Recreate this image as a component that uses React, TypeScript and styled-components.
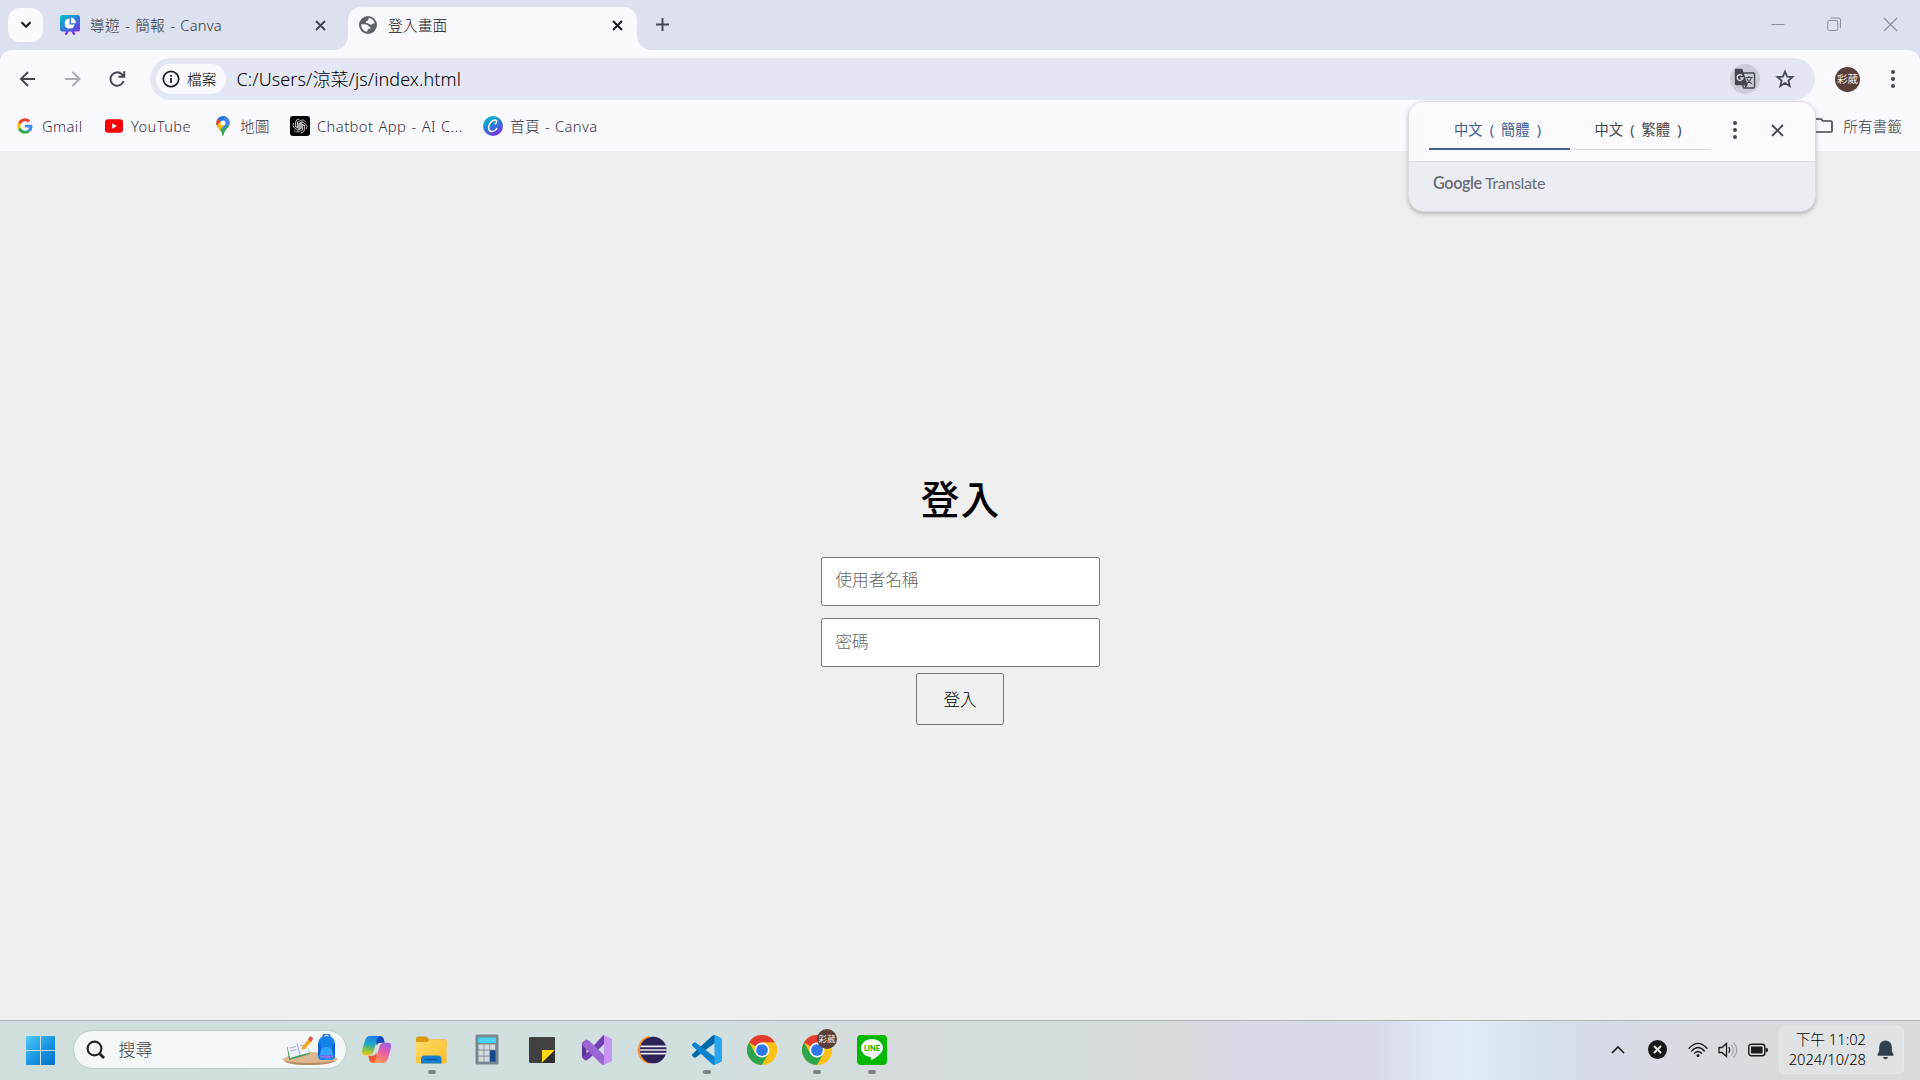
import React from "react";
import styled, { createGlobalStyle } from "styled-components";

const GlobalStyle = createGlobalStyle`
  * { box-sizing: border-box; }
  html, body { margin: 0; padding: 0; overflow: hidden; }
  body { font-family: "Noto Sans", "Noto Sans CJK TC", sans-serif; font-weight: 300; }
  svg { display: block; flex: none; }
`;

const Screen = styled.div`
  width: 1920px;
  height: 1080px;
  display: flex;
  flex-direction: column;
  background: #efefef;
`;

const Text = styled.span<{ $size?: number; $ls?: number; $ws?: number; $color?: string; $weight?: number }>`
  font-size: ${(p) => p.$size ?? 14.7}px;
  letter-spacing: ${(p) => p.$ls ?? 0}px;
  word-spacing: ${(p) => p.$ws ?? 0}px;
  color: ${(p) => p.$color ?? "#33363d"};
  font-weight: ${(p) => p.$weight ?? 300};
  line-height: 20px;
  white-space: nowrap;
`;

/* ---------- tab strip ---------- */
const TabStrip = styled.header`
  height: 50px;
  flex: none;
  display: flex;
  background: #dde0ee;
`;

const TabSearch = styled.button`
  width: 35px;
  height: 34px;
  margin: 8px 0 0 8px;
  padding: 0;
  border: 0;
  border-radius: 12px;
  background: #fbfaff;
  display: grid;
  place-items: center;
`;

const Tab = styled.div<{ $active?: boolean; $w: number }>`
  position: relative;
  width: ${(p) => p.$w}px;
  height: 43px;
  margin-top: 7px;
  padding: ${(p) => (p.$active ? "0 14px 7px 11px" : "0 22px 7px 17px")};
  display: flex;
  align-items: center;
  background: ${(p) => (p.$active ? "#faf9ff" : "transparent")};
  border-radius: 13px 13px 0 0;
  &::before, &::after {
    content: "";
    display: ${(p) => (p.$active ? "block" : "none")};
    position: absolute;
    bottom: 0;
    width: 14px;
    height: 14px;
  }
  &::before { left: -14px; background: radial-gradient(circle at 0 0, transparent 13.5px, #faf9ff 14.2px); }
  &::after { right: -14px; background: radial-gradient(circle at 100% 0, transparent 13.5px, #faf9ff 14.2px); }
`;

const TabTitle = styled(Text)<{ $gap: number }>`
  flex: 1;
  margin-left: ${(p) => p.$gap}px;
`;

const NewTab = styled.div`
  margin: 18px 0 0 19px;
`;

const WindowControls = styled.div`
  margin: 17px 22px 0 auto;
  display: flex;
  gap: 42px;
`;

/* ---------- toolbar ---------- */
const ToolbarBack = styled.div`
  flex: none;
  background: linear-gradient(#dde0ee 0 14px, #faf9ff 14px);
`;

const Toolbar = styled.div`
  height: 53px;
  display: flex;
  align-items: center;
  padding: 5px 0 0 16px;
  background: #faf9ff;
  border-radius: 12px 12px 0 0;
`;

const NavButtons = styled.div`
  display: flex;
  gap: 20.5px;
  width: 134px;
`;

const AddressBar = styled.div`
  width: 1665px;
  height: 42px;
  border-radius: 21px;
  background: #e4e7f3;
  display: flex;
  align-items: center;
  padding: 0 20px 0 6px;
`;

const FileChip = styled.div`
  width: 70px;
  height: 30px;
  border-radius: 15px;
  background: #faf9ff;
  display: flex;
  align-items: center;
  gap: 7px;
  padding-left: 6px;
`;

const Url = styled(Text)`
  flex: 1;
  margin-left: 10.5px;
`;

const TranslateBadge = styled.div`
  width: 30px;
  height: 30px;
  border-radius: 50%;
  background: #cacdd8;
  display: grid;
  place-items: center;
  margin-right: 15px;
`;

const Avatar = styled.div<{ $d: number; $fs: number }>`
  width: ${(p) => p.$d}px;
  height: ${(p) => p.$d}px;
  border-radius: 50%;
  background: #5a4038;
  color: #f6efec;
  font-size: ${(p) => p.$fs}px;
  font-weight: 400;
  line-height: ${(p) => p.$d - 1}px;
  text-align: center;
  white-space: nowrap;
`;

const ToolbarEnd = styled.div`
  display: flex;
  align-items: center;
  gap: 29.5px;
  margin-left: 20px;
`;

/* ---------- bookmarks ---------- */
const Bookmarks = styled.nav`
  height: 48px;
  flex: none;
  display: flex;
  align-items: center;
  padding: 0 18px 2px 15px;
  background: #faf9ff;
`;

const Bookmark = styled.div<{ $w?: number; $gap?: number }>`
  width: ${(p) => (p.$w ? `${p.$w}px` : "auto")};
  display: flex;
  align-items: center;
  gap: ${(p) => p.$gap ?? 7}px;
`;

const AllBookmarks = styled(Bookmark)`
  margin-left: auto;
`;

/* ---------- translate popup ---------- */
const Popup = styled.section`
  position: absolute;
  left: 1408px;
  top: 101px;
  width: 408px;
  height: 111px;
  border-radius: 16px;
  border: 1px solid #dcdde3;
  overflow: hidden;
  background: #ecedf3;
  box-shadow: 0 2px 4px rgba(0, 0, 0, 0.25);
`;

const PopupHeader = styled.div`
  height: 60px;
  background: #fdfbff;
  border-bottom: 1px solid #d8dae2;
  display: flex;
  padding-left: 20px;
`;

const LangTab = styled.div<{ $active?: boolean }>`
  width: ${(p) => (p.$active ? 141 : 140)}px;
  height: 48px;
  display: flex;
  justify-content: center;
  padding: 18px 4px 0 0;
  border-bottom: ${(p) => (p.$active ? "2px solid #3f5f90" : "1px solid #d8dae2")};
`;

const PopupActions = styled.div`
  display: flex;
  align-items: center;
  gap: 33px;
  margin-left: 22px;
  height: 56px;
`;

const PopupFooter = styled.div`
  padding: 11px 0 0 24px;
  font-family: "Lato", sans-serif;
  font-size: 16.2px;
  line-height: 20px;
  font-weight: 400;
  letter-spacing: -0.4px;
  color: #6a6c72;
  b { font-weight: 600; letter-spacing: -0.4px; }
`;

/* ---------- login page ---------- */
const Page = styled.main`
  flex: 1;
  display: flex;
  flex-direction: column;
  align-items: center;
  padding-top: 318px;
`;

const Heading = styled.h1`
  margin: 0 0 28px;
  height: 60px;
  line-height: 60px;
  font-size: 38.5px;
  letter-spacing: 1.5px;
  padding-left: 1.5px;
  font-weight: 500;
  color: #000;
`;

const Field = styled.input<{ $lift: number }>`
  width: 279px;
  height: 49px;
  margin-bottom: 12px;
  padding: 0 13px ${(p) => p.$lift}px 14px;
  border: 1px solid #767676;
  border-radius: 2.5px;
  background: #fff;
  font: 300 16.6px "Noto Sans CJK TC", sans-serif;
  &::placeholder { color: #666; opacity: 1; }
`;

const LoginButton = styled.button`
  width: 88px;
  height: 52px;
  margin-top: -6px;
  padding: 0;
  border: 1px solid #767676;
  border-radius: 2.5px;
  background: #efefef;
  color: #000;
  font: 300 16.6px "Noto Sans CJK TC", sans-serif;
`;

/* ---------- taskbar ---------- */
const Taskbar = styled.footer`
  height: 60px;
  flex: none;
  display: flex;
  align-items: center;
  border-top: 1px solid #adb2b4;
  padding: 0 16px 2px 26px;
  background: linear-gradient(90deg, #d0dfde 0, #d1dfdf 700px, #d6dbdc 900px, #d3dddc 1035px, #d9dadc 1190px,
    #d9d9e6 1215px, #d8d9e9 1370px, #e0e8f6 1435px, #e1ecf9 1465px, #d5e2ec 1540px, #d6dae9 1590px, #d9dbe0 1700px, #dadbdd 1920px);
`;

const StartButton = styled.div`
  padding-top: 2px;
`;

const SearchBox = styled.div`
  width: 274px;
  height: 39px;
  margin-left: 18px;
  border: 1px solid #bfcccc;
  border-radius: 20px;
  background: #f3f7f8;
  display: flex;
  align-items: center;
  padding: 0 7px 0 12px;
`;

const SearchLabel = styled(Text)`
  flex: 1;
  margin-left: 12.5px;
`;

const Apps = styled.div`
  display: flex;
  margin-left: 2px;
`;

const AppButton = styled.div<{ $running?: boolean }>`
  position: relative;
  width: 55px;
  height: 56px;
  display: grid;
  place-items: center;
  &::after {
    content: "";
    display: ${(p) => (p.$running ? "block" : "none")};
    position: absolute;
    left: 24px;
    bottom: 4px;
    width: 8px;
    height: 4px;
    border-radius: 2px;
    background: #7d8384;
  }
`;

const ProfileBadge = styled.div`
  position: absolute;
  left: 28px;
  top: 7px;
`;

const Tray = styled.div`
  margin-left: auto;
  display: flex;
  align-items: center;
`;

const TrayItem = styled.div<{ $w: number }>`
  width: ${(p) => p.$w}px;
`;

const Clock = styled.div`
  width: 125px;
  height: 48px;
  border-radius: 5px;
  background: #e1e2e4;
  border: 1px solid #e6e7e9;
  display: flex;
  align-items: center;
  gap: 11px;
  padding-left: 8px;
`;

const ClockText = styled.div`
  display: flex;
  flex-direction: column;
  align-items: flex-end;
  width: 78px;
  padding-bottom: 2px;
`;

/* ---------- icons ---------- */
const Cross = ({ s, w, c }: { s: number; w: number; c: string }) => (
  <svg width={s} height={s} viewBox={`0 0 ${s} ${s}`} stroke={c} strokeWidth={w}>
    <path d={`M1 1L${s - 1} ${s - 1}M${s - 1} 1L1 ${s - 1}`} />
  </svg>
);

const Dots = ({ c }: { c: string }) => (
  <svg width="6" height="20" viewBox="0 0 6 20" fill={c}>
    <circle cx="3" cy="3" r="2" /><circle cx="3" cy="10" r="2" /><circle cx="3" cy="17" r="2" />
  </svg>
);

const PresentationIcon = () => (
  <svg width="20" height="20" viewBox="0 0 20 20">
    <defs>
      <linearGradient id="pres" x1="0" y1="0" x2="1" y2="1">
        <stop offset="0" stopColor="#00c4cc" /><stop offset=".5" stopColor="#2f7fd6" /><stop offset="1" stopColor="#7d2ae8" />
      </linearGradient>
    </defs>
    <path d="M8.500 14L6 19M11.500 14L14 19" stroke="#7d2ae8" strokeWidth="2.200" strokeLinecap="round" />
    <rect width="20" height="16.500" rx="2.500" fill="url(#pres)" />
    <path d="M9.500 3.600A5 5 0 1 0 14.600 9.600H9.500Z" fill="#fff" />
    <path d="M11 2.600V8.200H15.800A5.200 5.200 0 0 0 11 2.600Z" fill="#fff" />
  </svg>
);

const GlobeIcon = () => (
  <svg width="18" height="18" viewBox="0 0 18 18">
    <circle cx="9" cy="9" r="9" fill="#5f6368" />
    <path d="M10 2.100C12.800 2.500 15 4.600 15.700 7.200C14.600 7.800 13.400 7.500 12.700 8.400C11.700 9.300 10.400 8.400 9.700 7.600C8.600 6.900 6.800 7.400 6.900 5.900C7.100 4.900 8.600 5.200 9.200 4.300C9.600 3.500 9.200 2.700 10 2.100ZM2.200 8.300C4.600 8.100 7.600 8.200 9.400 9.900C10.100 10.900 11.900 10.900 11.400 12.300C10.500 13 9 12.800 8.600 14.100C8.500 14.900 8.400 15.400 7.900 15.800C4.600 15.200 2 12.400 2.200 8.300Z" fill="#faf9ff" />
  </svg>
);

const GoogleG = () => (
  <svg width="20" height="20" viewBox="-7 -7 62 62">
    <path fill="#EA4335" d="M24 9.5c3.54 0 6.71 1.22 9.21 3.6l6.85-6.85C35.9 2.38 30.47 0 24 0 14.62 0 6.51 5.38 2.56 13.22l7.98 6.19C12.43 13.72 17.74 9.5 24 9.5z" />
    <path fill="#4285F4" d="M46.98 24.55c0-1.57-.15-3.09-.38-4.55H24v9.02h12.94c-.58 2.96-2.26 5.48-4.78 7.18l7.73 6c4.51-4.18 7.09-10.36 7.09-17.65z" />
    <path fill="#FBBC05" d="M10.53 28.59c-.48-1.45-.76-2.99-.76-4.59s.27-3.14.76-4.59l-7.98-6.19C.92 16.46 0 20.12 0 24s.92 7.54 2.56 10.78l7.97-6.19z" />
    <path fill="#34A853" d="M24 48c6.48 0 11.93-2.13 15.89-5.81l-7.73-6c-2.15 1.45-4.92 2.3-8.16 2.3-6.26 0-11.57-4.22-13.47-9.91l-7.98 6.19C6.51 42.62 14.62 48 24 48z" />
  </svg>
);

const YouTubeIcon = () => (
  <svg width="20" height="20" viewBox="0 0 20 20">
    <rect x="1" y="3.300" width="18" height="13.400" rx="3" fill="#f00" />
    <path d="M8.200 7.200V12.800L13 10Z" fill="#fff" />
  </svg>
);

const MapsIcon = () => (
  <svg width="20" height="20" viewBox="0 0 20 20">
    <defs>
      <clipPath id="pin"><path d="M10 .3A6.800 6.800 0 0 0 3.200 7.100C3.200 9.500 4.600 11 6 12.800C7.800 15 8.900 16.600 9.300 18.900Q10 20.600 10.700 18.900C11.100 16.600 12.200 15 14 12.800C15.400 11 16.800 9.500 16.800 7.100A6.800 6.800 0 0 0 10 .3Z" /></clipPath>
    </defs>
    <g clipPath="url(#pin)">
      <rect width="20" height="20" fill="#34a853" />
      <path d="M0 0H20V3L10 8L4 3Z" fill="#4285f4" />
      <path d="M12 0L20 0V3.500L10 14L7.500 5.500Z" fill="#4285f4" />
      <path d="M0 0H3L4.800 2.600L8 5.500L3.500 11L0 9Z" fill="#ea4335" />
      <path d="M2.500 11.500L7.800 5.300L11.800 8.700L6 15Z" fill="#fbbc04" />
      <path d="M4.900 2.300L10 0H13L8 5.800Z" fill="#1a73e8" />
    </g>
    <circle cx="10" cy="7.100" r="2.500" fill="#fff" />
  </svg>
);

const ChatbotIcon = () => (
  <svg width="20" height="20" viewBox="0 0 20 20">
    <rect width="20" height="20" rx="3" fill="#000" />
    <g fill="none" stroke="#d0d0d0" strokeWidth=".8">
      {[0, 60, 120, 180, 240, 300].map((a) => (
        <path key={a} transform={`rotate(${a} 10 10)`} d="M7.600 11.400V6.200L11 4.200Q14 3 15.800 6M9 11.600V7.400L12.600 5.400" />
      ))}
    </g>
  </svg>
);

const CanvaIcon = () => (
  <svg width="20" height="20" viewBox="0 0 20 20">
    <defs>
      <linearGradient id="canva" x1=".2" y1="0" x2=".7" y2="1">
        <stop offset="0" stopColor="#07bfcb" /><stop offset=".5" stopColor="#2a7bd8" /><stop offset="1" stopColor="#7a2be6" />
      </linearGradient>
    </defs>
    <circle cx="10" cy="10" r="10" fill="url(#canva)" />
    <path d="M12.200 7.800C13.800 7.500 14.400 4 12 4C8.500 4 5.200 9 5.600 12.400C6 16.200 10.700 16.600 13.800 12.600" fill="none" stroke="#fff" strokeWidth="1.500" strokeLinecap="round" />
  </svg>
);

const TranslateIcon = () => (
  <svg width="22" height="22" viewBox="0 0 22 22">
    <rect x="9" y="5" width="11.500" height="15" rx="1.200" fill="#cacdd8" stroke="#44474f" strokeWidth="1.400" />
    <path d="M2.200 .8H8.300L13.800 17.200H2.200Q.8 17.200 .8 15.800V2.200Q.8 .8 2.200 .8Z" fill="#44474f" />
    <path d="M10.500 17L13.500 17L11.500 20.500Z" fill="#44474f" />
    <path d="M8.300 7.600A2.900 2.900 0 1 0 8.900 10H6.400" fill="none" stroke="#e4e7f3" strokeWidth="1.300" />
    <path d="M11.500 9.500H18.700M15 8V9.500M17.300 9.800C16.500 12.500 14.600 14.400 12.800 15.800M12.800 10.500C14 13 16 14.800 18 15.800" fill="none" stroke="#44474f" strokeWidth="1.100" />
  </svg>
);

const WindowsLogo = () => (
  <svg width="29" height="29" viewBox="0 0 29 29">
    <defs>
      <linearGradient id="win" gradientUnits="userSpaceOnUse" x1="0" y1="0" x2="29" y2="29">
        <stop offset="0" stopColor="#4fcbf9" /><stop offset=".5" stopColor="#1c97e4" /><stop offset="1" stopColor="#0470cb" />
      </linearGradient>
    </defs>
    <path fill="url(#win)" d="M1 0H14V14H0V1Q0 0 1 0ZM15 0H28Q29 0 29 1V14H15ZM0 15H14V29H1Q0 29 0 28ZM15 15H29V28Q29 29 28 29H15Z" />
  </svg>
);

const SchoolArt = () => (
  <svg width="58" height="32" viewBox="0 0 58 32">
    <path d="M1 25Q14 18 32 18Q48 18 57 25Q52 31 28 31Q6 31 1 25Z" fill="#dfb78e" />
    <path d="M3 27Q28 31 55 27Q48 31 28 31Q8 31 3 27Z" fill="#b98a63" />
    <path d="M6 13L25 8L29 20L8 26Z" fill="#3f9b55" />
    <path d="M6 11L16 8.500L26 7L28 19L19 21L9 24Z" fill="#eef0fa" />
    <path d="M16 9L19 21M9 14L15 12.500M10 17L15.500 15.500M19 12L23 11" stroke="#a9acd0" strokeWidth="1" />
    <path d="M21 13L28 4.500L31 7L24 15L20.500 16Z" fill="#f5a623" />
    <path d="M27 5L29 2.500Q32 2 32 5L30 8Z" fill="#e2574c" />
    <path d="M42 4Q42 0 45.500 0Q49 0 49 4" stroke="#1671d8" strokeWidth="1.600" fill="none" />
    <path d="M37 9Q38 2 45.500 2Q53 2 54 9V22Q54 26 50 26H41Q37 26 37 22Z" fill="#1483ee" />
    <path d="M39 18Q41 13 45.500 13Q50 13 52 18V21H39Z" fill="#35a4ff" />
    <path d="M39 21.500H52V23Q46 25 39 23Z" fill="#9b74e4" />
    <path d="M37 10H39.500V19L37 22ZM54 10H51.500V19L54 22Z" fill="#0a5fc4" />
  </svg>
);

const CopilotIcon = () => (
  <svg width="31" height="29" viewBox="0 0 32 30">
    <defs>
      <linearGradient id="cpA" x1=".4" y1="0" x2=".3" y2="1">
        <stop offset="0" stopColor="#1b7fe6" /><stop offset=".4" stopColor="#1fa8c9" /><stop offset=".7" stopColor="#7cc04a" /><stop offset="1" stopColor="#f6c21c" />
      </linearGradient>
      <linearGradient id="cpB" x1=".7" y1="0" x2=".3" y2="1">
        <stop offset="0" stopColor="#a25be8" /><stop offset=".5" stopColor="#f0609e" /><stop offset="1" stopColor="#ff9b52" />
      </linearGradient>
    </defs>
    <path d="M15 1H20Q22.500 1 23.500 4L24.500 8H20Q17 8 16 11Z" fill="#1546c0" />
    <path d="M17 29H12Q9.500 29 8.500 26L7.500 21.500H12Q15 21 16 18Z" fill="#ee5a37" />
    <path d="M9 1H20Q17.500 1.500 16.500 5L13 17Q11.500 21 8 21H4Q0 21 1 16L4 6Q5.500 1 9 1Z" fill="url(#cpA)" />
    <path d="M23 29H12Q14.500 28.500 15.500 25L19 12Q20.500 8 24 8H28Q32 8 31 13L28 24Q26.500 29 23 29Z" fill="url(#cpB)" />
  </svg>
);

const FolderIcon = () => (
  <svg width="31" height="28" viewBox="0 0 31 28">
    <defs>
      <linearGradient id="fold" x1="0" y1="0" x2="1" y2="1"><stop offset="0" stopColor="#ffdc6b" /><stop offset="1" stopColor="#fbbd24" /></linearGradient>
    </defs>
    <path d="M0 2.500Q0 .5 2 .5H9Q10.500 .5 11.500 1.500L13 3.500H29Q30.500 3.500 30.500 5V10H0Z" fill="#dd9a14" />
    <path d="M0 6H11L14 3.500H29Q30.500 3.500 30.500 5V26Q30.500 27.500 29 27.500H1.500Q0 27.500 0 26Z" fill="url(#fold)" />
    <path d="M5 27.500V23Q5 19.500 8.500 19.500H22Q25.500 19.500 25.500 23V27.500Z" fill="#1680cf" />
    <path d="M8.500 23.500H22" stroke="#0b55a0" strokeWidth="1.200" />
  </svg>
);

const CalcIcon = () => (
  <svg width="24" height="31" viewBox="0 0 24 31">
    <rect x=".5" y=".5" width="23" height="30" rx="1.500" fill="#7b858d" />
    <rect x="3" y="3.500" width="18" height="5.500" rx=".8" fill="#4bd3f4" />
    {[10.5, 16.5, 22.5].map((y, r) =>
      [3.5, 9.3, 15.1].map((x, c) => (c === 2 && r > 0 ? null : <rect key={`${x}${y}`} x={x} y={y} width="5.100" height="5.100" fill="#d5dae0" />)),
    )}
    <rect x="15.100" y="16.500" width="5.400" height="11.100" fill="#104a8d" />
  </svg>
);

const StickyIcon = () => (
  <svg width="26" height="26" viewBox="0 0 26 26">
    <rect width="26" height="26" rx="1.200" fill="#414141" />
    <path d="M13 13H26L13 26Z" fill="#ffd60a" />
    <path d="M26 13V26H13Z" fill="#2e2e2e" />
  </svg>
);

const VisualStudioIcon = () => (
  <svg width="30" height="30" viewBox="0 0 30 30">
    <path d="M0 8L4 4.500L4.500 15L4.500 25.500L0 22Z" fill="#5c3296" />
    <path d="M0 22L5 18L20 1.500Q21 0 22 0L22 9L8 23Q4 26.500 2.500 25Z" fill="#7340b4" />
    <path d="M0 9L4 4.500Q6 4.500 8 6.500L22 20V30Q20 30 18 28L2 12Z" fill="#9a68d3" />
    <path d="M22 0L29 3.500Q30 4 30 5V25Q30 26 29 26.500L22 30Z" fill="#c793f5" />
  </svg>
);

const EclipseIcon = () => (
  <svg width="31" height="28" viewBox="0 0 31 28">
    <path d="M13 .8A13.500 13.500 0 0 0 13 27.200A17 17 0 0 1 13 .8Z" fill="#f3953b" stroke="#f3953b" strokeWidth="1.500" />
    <circle cx="17.200" cy="14" r="13.300" fill="#2c2255" />
    <path d="M4.500 10.300H30M4 14H30.500M4.500 17.700H30" stroke="#eceaf5" strokeWidth="1.700" />
  </svg>
);

const VSCodeIcon = () => (
  <svg width="30" height="30" viewBox="0 0 100 100">
    <path d="M96.500 10.700L75.900 .8C73.500-.4 70.700 .1 68.800 2L1.300 63.600C-.5 65.200-.5 68.100 1.300 69.800L6.800 74.800C8.300 76.200 10.600 76.300 12.200 75L93.500 13.400C96.200 11.300 100 13.300 100 16.700V16.500C100 14 98.600 11.700 96.500 10.700Z" fill="#0069ad" />
    <path d="M96.500 89.300L75.900 99.200C73.500 100.400 70.700 99.900 68.800 98L1.300 36.400C-.5 34.800-.5 31.900 1.300 30.200L6.800 25.200C8.300 23.800 10.600 23.700 12.200 25L93.500 86.600C96.200 88.700 100 86.700 100 83.300V83.500C100 86 98.600 88.300 96.500 89.300Z" fill="#0a82cd" />
    <path d="M75.900 99.200C73.500 100.400 70.700 99.900 68.800 98C71.100 100.300 75 98.700 75 95.400V4.600C75 1.300 71.100-.3 68.800 2C70.700 .1 73.500-.4 75.900 .8L96.500 10.700C98.600 11.700 100 13.900 100 16.300V83.700C100 86.100 98.600 88.300 96.500 89.300Z" fill="#27a5f2" />
  </svg>
);

const ChromeIcon = () => (
  <svg width="30" height="30" viewBox="0 0 48 48">
    <circle cx="24" cy="24" r="24" fill="#fbc116" />
    <path d="M24 24L3.200 12A24 24 0 0 1 44.800 12H24Z" fill="#e33b2e" />
    <path d="M3.200 12A24 24 0 0 0 24 48L34.400 30L24 30L13.600 30Z" fill="#2da44e" />
    <path d="M24 48A24 24 0 0 0 44.800 12H24L34.400 30Z" fill="#fbc116" />
    <circle cx="24" cy="24" r="12" fill="#fff" />
    <circle cx="24" cy="24" r="9.400" fill="#2f78ec" />
  </svg>
);

const LineIcon = () => (
  <svg width="30" height="30" viewBox="0 0 30 30">
    <rect width="30" height="30" rx="4" fill="#00b900" />
    <path d="M15 4C8.800 4 4 8 4 13C4 17.600 7.800 21 13 21.800C14.500 22.200 14 23.500 13.800 25.500C18 23.500 26 18.500 26 13C26 8 21.200 4 15 4Z" fill="#fff" />
    <text x="15" y="16.200" fontSize="7" fontWeight="900" fontFamily="Lato, sans-serif" fill="#00b900" textAnchor="middle" textLength="16" lengthAdjust="spacingAndGlyphs">LINE</text>
  </svg>
);

export default function App() {
  return (
    <Screen>
      <GlobalStyle />
      <TabStrip>
        <TabSearch>
          <svg width="12" height="8" viewBox="0 0 12 8" fill="none" stroke="#1b1b20" strokeWidth="2.200"><path d="M1.500 1.300L6 5.800L10.500 1.300" /></svg>
        </TabSearch>
        <Tab $w={305}>
          <PresentationIcon />
          <TabTitle $gap={10} $ls={0.2} $ws={1.2}>導遊 - 簡報 - Canva</TabTitle>
          <Cross s={11} w={1.9} c="#44474f" />
        </Tab>
        <Tab $active $w={289}>
          <GlobeIcon />
          <TabTitle $gap={11} $ls={0.15} $color="#111116">登入畫面</TabTitle>
          <Cross s={11} w={2.1} c="#1b1b20" />
        </Tab>
        <NewTab>
          <svg width="13" height="13" viewBox="0 0 13 13" stroke="#44474f" strokeWidth="1.900"><path d="M6.500 0V13M0 6.500H13" /></svg>
        </NewTab>
        <WindowControls>
          <svg width="14" height="14" viewBox="0 0 14 14" stroke="#8a8d99"><path d="M.5 7.500H13.500" /></svg>
          <svg width="14" height="14" viewBox="0 0 14 14" fill="none" stroke="#8a8d99"><rect x=".8" y="3.500" width="10" height="10" rx="1.500" /><path d="M3.500 1H11.500Q13.500 1 13.500 3V10.800" /></svg>
          <Cross s={15} w={1.1} c="#8a8d99" />
        </WindowControls>
      </TabStrip>

      <ToolbarBack>
        <Toolbar>
          <NavButtons>
            <svg width="24" height="24" viewBox="0 0 24 24" fill="none" stroke="#44474f" strokeWidth="1.900"><path d="M19 12H5M12 5L5 12L12 19" /></svg>
            <svg width="24" height="24" viewBox="0 0 24 24" fill="none" stroke="#a9abb4" strokeWidth="1.900"><path d="M4 12H18.500M11.500 5L18.500 12L11.500 19" /></svg>
            <svg width="24" height="24" viewBox="0 0 24 24" fill="none" stroke="#44474f" strokeWidth="2"><path d="M18.600 14A6.700 6.700 0 1 1 16.800 7.200L19 9.400M19.200 4.200V9.800H13.500" /></svg>
          </NavButtons>
          <AddressBar>
            <FileChip>
              <svg width="18" height="18" viewBox="0 0 18 18" fill="none" stroke="#1b1b20" strokeWidth="1.700"><circle cx="9" cy="9" r="7.700" /><path d="M9 8V13M9 5V6.700" /></svg>
              <Text $color="#000">檔案</Text>
            </FileChip>
            <Url $size={18} $ls={0.1} $color="#000">C:/Users/涼菜/js/index.html</Url>
            <TranslateBadge><TranslateIcon /></TranslateBadge>
            <svg width="20" height="20" viewBox="0 0 20 20" fill="none" stroke="#44474f" strokeWidth="1.800"><path d="M10 2.500L12.100 7.600L17.600 8L13.400 11.600L14.700 17L10 14.100L5.300 17L6.600 11.600L2.400 8L7.900 7.600Z" /></svg>
          </AddressBar>
          <ToolbarEnd>
            <Avatar $d={25} $fs={10.5}>彩葳</Avatar>
            <Dots c="#44474f" />
          </ToolbarEnd>
        </Toolbar>
      </ToolbarBack>

      <Bookmarks>
        <Bookmark $w={89}><GoogleG /><Text $ls={0.4}>Gmail</Text></Bookmark>
        <Bookmark $w={109}><YouTubeIcon /><Text $ls={0.4}>YouTube</Text></Bookmark>
        <Bookmark $w={77}><MapsIcon /><Text>地圖</Text></Bookmark>
        <Bookmark $w={193}><ChatbotIcon /><Text $ls={0.45} $ws={0.8}>Chatbot App - AI C...</Text></Bookmark>
        <Bookmark><CanvaIcon /><Text $ls={0.35} $ws={0.8}>首頁 - Canva</Text></Bookmark>
        <AllBookmarks $gap={10}>
          <svg width="19" height="16" viewBox="0 0 19 16" fill="none" stroke="#44474f" strokeWidth="1.700"><path d="M1 13V2Q1 1 2 1H7L9 3H17Q18 3 18 4V13Q18 14 17 14H2Q1 14 1 13Z" /></svg>
          <Text>所有書籤</Text>
        </AllBookmarks>
      </Bookmarks>

      <Popup>
        <PopupHeader>
          <LangTab $active><Text $size={14.3} $ws={3.4} $color="#3f5f90" $weight={400}>中文 ( 簡體 )</Text></LangTab>
          <LangTab><Text $size={14.3} $ws={3.4} $color="#44474f" $weight={400}>中文 ( 繁體 )</Text></LangTab>
          <PopupActions><Dots c="#44474f" /><Cross s={13} w={1.9} c="#44474f" /></PopupActions>
        </PopupHeader>
        <PopupFooter><b>Google</b> Translate</PopupFooter>
      </Popup>

      <Page>
        <Heading>登入</Heading>
        <Field $lift={6} placeholder="使用者名稱" />
        <Field $lift={4} placeholder="密碼" type="password" />
        <LoginButton>登入</LoginButton>
      </Page>

      <Taskbar>
        <StartButton><WindowsLogo /></StartButton>
        <SearchBox>
          <svg width="20" height="20" viewBox="0 0 20 20" fill="none" stroke="#222" strokeWidth="2.100"><circle cx="8.500" cy="8.500" r="6.900" /><path d="M13.500 13.500L18 18" strokeWidth="2.800" /></svg>
          <SearchLabel $size={17} $color="#3c4042">搜尋</SearchLabel>
          <SchoolArt />
        </SearchBox>
        <Apps>
          <AppButton><CopilotIcon /></AppButton>
          <AppButton $running><FolderIcon /></AppButton>
          <AppButton><CalcIcon /></AppButton>
          <AppButton><StickyIcon /></AppButton>
          <AppButton><VisualStudioIcon /></AppButton>
          <AppButton><EclipseIcon /></AppButton>
          <AppButton $running><VSCodeIcon /></AppButton>
          <AppButton><ChromeIcon /></AppButton>
          <AppButton $running><ChromeIcon /><ProfileBadge><Avatar $d={20} $fs={8.5}>彩葳</Avatar></ProfileBadge></AppButton>
          <AppButton $running><LineIcon /></AppButton>
        </Apps>
        <Tray>
          <TrayItem $w={37}><svg width="14" height="9" viewBox="0 0 14 9" fill="none" stroke="#1b1b1b" strokeWidth="1.700"><path d="M1 8L7 2L13 8" /></svg></TrayItem>
          <TrayItem $w={40}><svg width="19" height="19" viewBox="0 0 19 19"><circle cx="9.500" cy="9.500" r="9.500" fill="#181818" /><path d="M6 6L13 13M13 6L6 13" stroke="#e8e8ea" strokeWidth="2" /></svg></TrayItem>
          <TrayItem $w={30}>
            <svg width="20" height="16" viewBox="0 0 20 16" fill="none" stroke="#1b1b1b" strokeWidth="1.400" strokeLinecap="round">
              <path d="M1 6.300Q10-3.500 19 6.300M3.700 9Q10 2 16.300 9M6.400 11.400Q10 7.500 13.600 11.400" /><circle cx="10" cy="13.600" r="1.500" fill="#1b1b1b" stroke="none" />
            </svg>
          </TrayItem>
          <TrayItem $w={30}>
            <svg width="20" height="18" viewBox="0 0 20 18" fill="none" stroke="#1b1b1b" strokeWidth="1.300" strokeLinecap="round">
              <path d="M1 6.500V11.500H4L8.500 15.500V2.500L4 6.500ZM11 6.500Q12.500 9 11 11.500" /><path d="M13.500 4Q17 9 13.500 14M16 2Q21.500 9 16 16" stroke="#a4a6aa" />
            </svg>
          </TrayItem>
          <TrayItem $w={31}>
            <svg width="20" height="14" viewBox="0 0 20 14"><rect x=".8" y="1.300" width="16" height="11.400" rx="2.500" fill="none" stroke="#1b1b1b" strokeWidth="1.400" /><rect x="3" y="3.500" width="11.600" height="7" rx="1" fill="#1b1b1b" /><path d="M18 5V9Q20 8.500 20 7Q20 5.500 18 5Z" fill="#1b1b1b" stroke="#1b1b1b" strokeWidth=".6" /></svg>
          </TrayItem>
          <Clock>
            <ClockText>
              <Text $color="#000">下午 11:02</Text>
              <Text $color="#000">2024/10/28</Text>
            </ClockText>
            <svg width="17" height="20" viewBox="0 0 17 20" fill="#30404d"><path d="M8.500 .5A6.300 6.300 0 0 0 2.200 6.800V11L.5 14.500Q.2 15.700 1.300 15.700H15.700Q16.800 15.700 16.500 14.500L14.800 11V6.800A6.300 6.300 0 0 0 8.500 .5ZM6 17H11Q10.500 19.300 8.500 19.300Q6.500 19.300 6 17Z" /></svg>
          </Clock>
        </Tray>
      </Taskbar>
    </Screen>
  );
}
